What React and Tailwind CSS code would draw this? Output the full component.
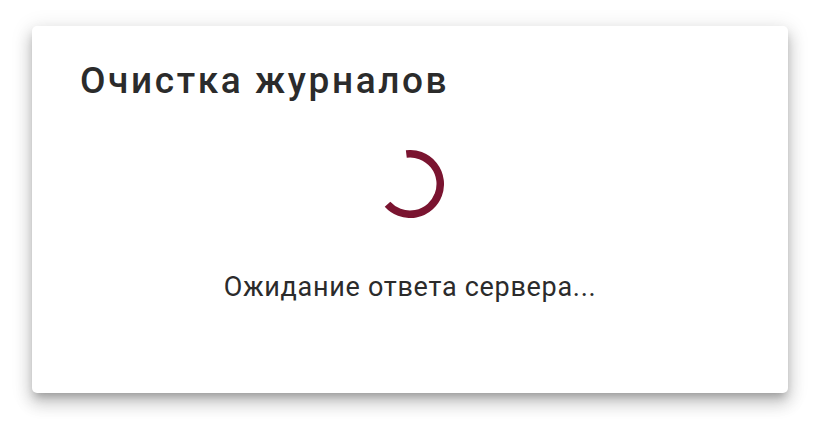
export default function App() {
    return (
        <div className="min-h-[432px] bg-white px-8 pt-[26px] font-['Roboto',sans-serif]">
            <div className="h-[367px] rounded-[5px] bg-white px-12 pt-[34px] shadow-[0_6px_8px_-3px_rgba(0,0,0,0.25),0_10px_16px_2px_rgba(0,0,0,0.14),0_4px_20px_3px_rgba(0,0,0,0.10)]">
                <h1 className="text-[37px] font-medium leading-[42px] tracking-[2.6px] text-[#2b2b2b]">Очистка журналов</h1>
                <div className="mt-[48px] flex justify-center">
                    <svg width="68" height="68" viewBox="0 0 68 68">
                        <path
                            d="M30.31 3.98 A30.25 30.25 0 1 1 11.52 54.24"
                            fill="none"
                            stroke="#7a1430"
                            strokeWidth="7.5"
                        />
                    </svg>
                </div>
                <p className="mt-[53px] text-center text-[27px] leading-[32px] tracking-[0.7px] text-[#2b2b2b]">Ожидание ответа сервера...</p>
            </div>
        </div>
    )
}
